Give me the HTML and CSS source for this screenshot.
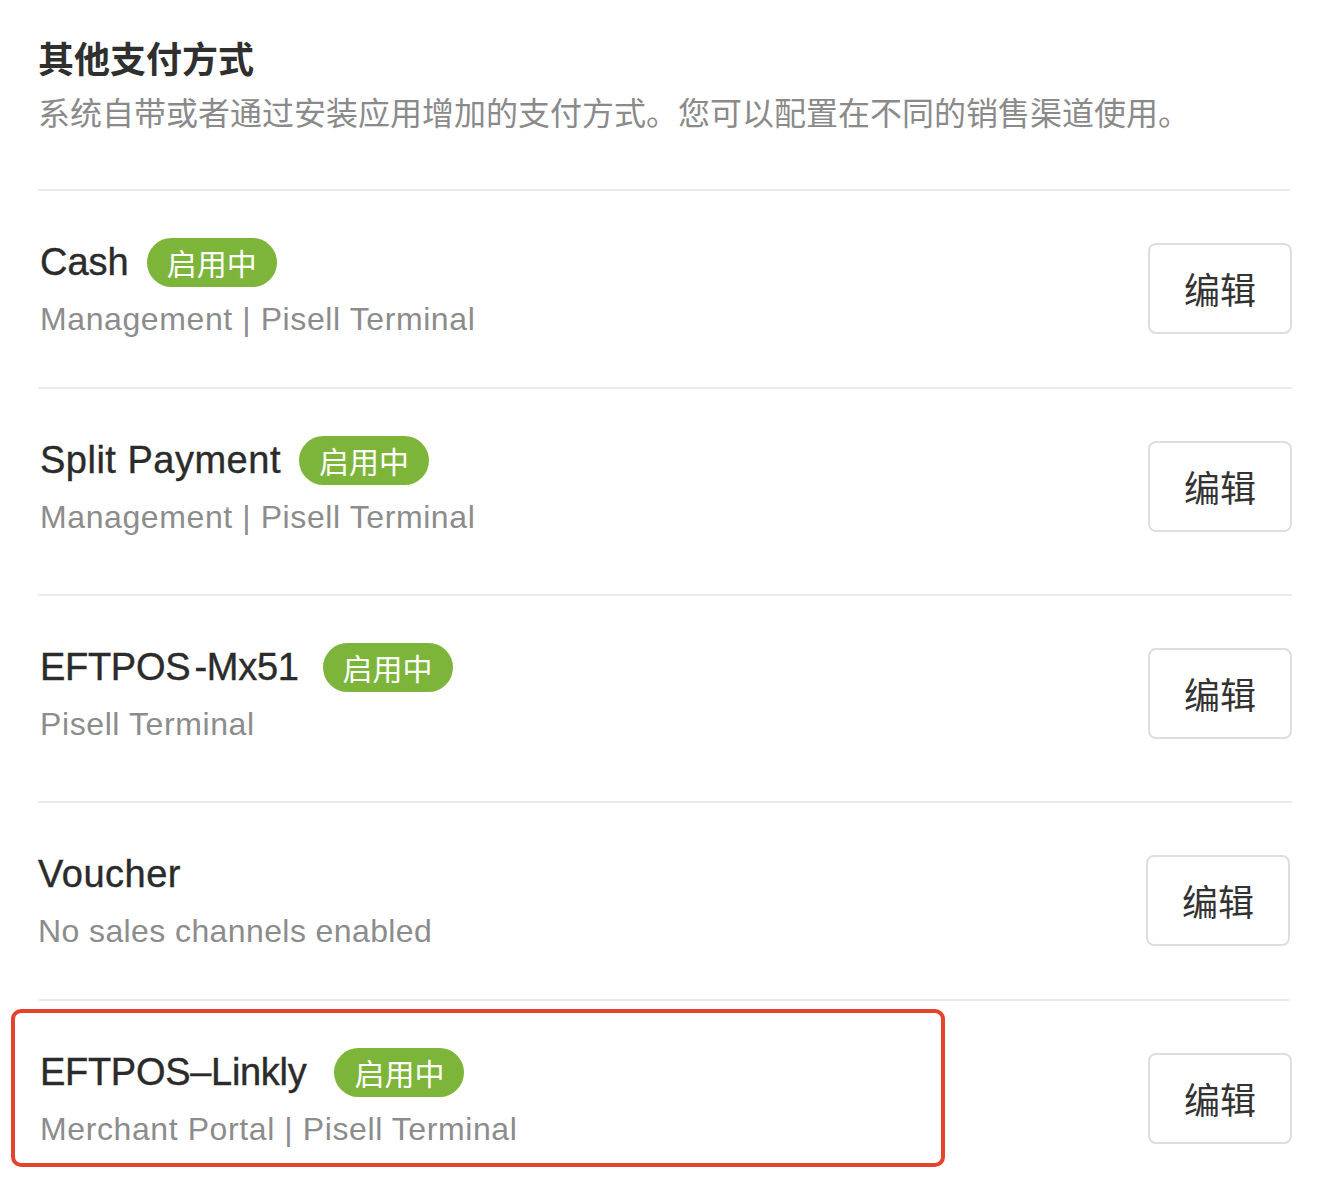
FILE: index.html
```html
<!DOCTYPE html>
<html lang="zh-CN">
<head>
<meta charset="utf-8">
<title>其他支付方式</title>
<link rel="stylesheet" href="styles.css">
</head>
<body>
<div class="page">
  <header class="head">
    <h1 class="title">其他支付方式</h1>
    <p class="subtitle">系统自带或者通过安装应用增加的支付方式。您可以配置在不同的销售渠道使用。</p>
  </header>

  <div class="list">
    <div class="row">
      <div class="info">
        <div class="name-line"><span class="name">Cash</span><span class="badge">启用中</span></div>
        <div class="meta">Management | Pisell Terminal</div>
      </div>
      <button class="edit">编辑</button>
    </div>

    <div class="row row--tall">
      <div class="info">
        <div class="name-line"><span class="name name--spaced">Split Payment</span><span class="badge">启用中</span></div>
        <div class="meta">Management | Pisell Terminal</div>
      </div>
      <button class="edit">编辑</button>
    </div>

    <div class="row row--tall">
      <div class="info">
        <div class="name-line"><span class="name name--tight name--wide">EFTPOS -Mx51</span><span class="badge">启用中</span></div>
        <div class="meta">Pisell Terminal</div>
      </div>
      <button class="edit">编辑</button>
    </div>

    <div class="row row--flush">
      <div class="info">
        <div class="name-line"><span class="name name--spaced">Voucher</span></div>
        <div class="meta meta--narrow">No sales channels enabled</div>
      </div>
      <button class="edit">编辑</button>
    </div>

    <div class="row row--last">
      <div class="info">
        <div class="name-line"><span class="name name--wider">EFTPOS–Linkly</span><span class="badge">启用中</span></div>
        <div class="meta">Merchant Portal | Pisell Terminal</div>
      </div>
      <button class="edit">编辑</button>
      <div class="highlight"></div>
    </div>
  </div>
</div>
</body>
</html>
```

FILE: styles.css
```css
* { box-sizing: border-box; }

html, body {
  margin: 0;
  padding: 0;
  background: #ffffff;
}

body {
  font-family: "Liberation Sans", "Noto Sans CJK SC", sans-serif;
  color: #2e2e2e;
}

.page {
  width: 1322px;
  height: 1184px;
  overflow: hidden;
  padding: 32px 0 0 38px;
}

.head {
  width: 1252px;
  padding-bottom: 56px;
  border-bottom: 2px solid #ebebeb;
}

.title {
  margin: 0;
  font-family: "Noto Sans CJK SC", sans-serif;
  font-size: 36px;
  line-height: 50px;
  font-weight: 700;
  color: #2f2f2f;
}

.subtitle {
  margin: 7px 0 0;
  font-family: "Noto Sans CJK SC", sans-serif;
  font-size: 32px;
  line-height: 44px;
  letter-spacing: 0;
  color: #8a8a8a;
}

.list {
  width: 1252px;
}

.row {
  position: relative;
  display: flex;
  align-items: center;
  justify-content: space-between;
  padding: 46px 0 48px 2px;
  margin-right: -2px;
  border-bottom: 2px solid #ebebeb;
}

.row--tall { padding-bottom: 57px; }

.row--flush {
  padding-left: 0;
  margin-right: 0;
}

.row--last { border-bottom: none; }

.info {
  display: flex;
  flex-direction: column;
  gap: 12px;
}

.name-line {
  display: flex;
  align-items: center;
  height: 50px;
}

.name {
  font-size: 38px;
  line-height: 50px;
  color: #2b2b2b;
  margin-right: 18px;
  -webkit-text-stroke: 0.4px #2b2b2b;
}

.name--spaced { letter-spacing: 0.5px; }
.name--tight { word-spacing: -6px; letter-spacing: -0.3px; }
.name--wide { margin-right: 24px; }
.name--wider { margin-right: 28px; letter-spacing: -0.3px; }

.badge {
  display: inline-flex;
  align-items: center;
  height: 49px;
  padding: 0 20px;
  border-radius: 25px;
  background: #7db53b;
  color: #ffffff;
  font-family: "Noto Sans CJK SC", sans-serif;
  font-size: 30px;
  line-height: 1;
}

.meta {
  font-size: 32px;
  line-height: 40px;
  letter-spacing: 0.6px;
  color: #8c8c8c;
}

.meta--narrow { letter-spacing: 0.4px; }

.edit {
  width: 144px;
  height: 91px;
  border: 2px solid #dedede;
  border-radius: 8px;
  background: #ffffff;
  font-family: "Noto Sans CJK SC", sans-serif;
  font-size: 36px;
  color: #333333;
  padding: 0;
  cursor: pointer;
}

.highlight {
  position: absolute;
  left: -27px;
  top: 8px;
  width: 934px;
  height: 158px;
  border: 4px solid #e5432c;
  border-radius: 10px;
  pointer-events: none;
}
```
